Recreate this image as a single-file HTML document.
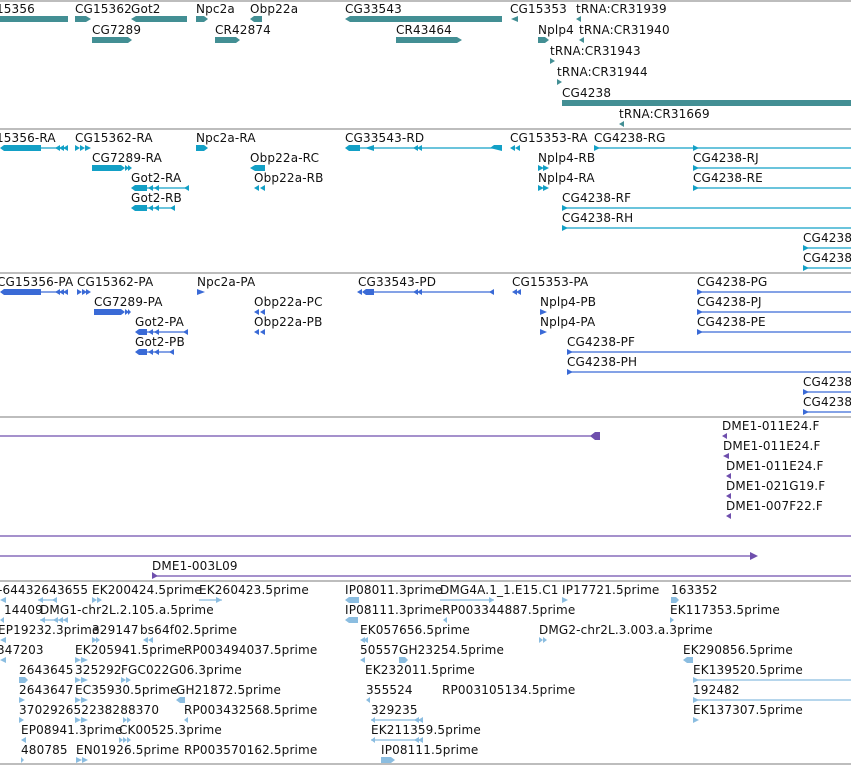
<!DOCTYPE html>
<html><head><meta charset="utf-8"><style>
html,body{margin:0;padding:0;background:#fff;overflow:hidden}
svg{display:block}
text{font-family:"DejaVu Sans","Liberation Sans",sans-serif;font-size:12px;letter-spacing:0.15px;fill:#111}
</style></head><body>
<svg width="851" height="765" viewBox="0 0 851 765" xmlns="http://www.w3.org/2000/svg">
<g stroke="#bdbdbd" stroke-width="2">
<line x1="0" y1="1" x2="851" y2="1"/><line x1="0" y1="129" x2="851" y2="129"/>
<line x1="0" y1="273" x2="851" y2="273"/><line x1="0" y1="417" x2="851" y2="417"/>
<line x1="0" y1="581" x2="851" y2="581"/><line x1="0" y1="764" x2="851" y2="764"/>
</g>

<g fill="#438f94">
<rect x="0" y="16" width="68" height="6"/>
<polygon points="75,16 86,16 91,19 86,22 75,22"/>
<polygon points="136,16 187,16 187,22 136,22 131,19"/>
<polygon points="196,16 204,16 208,19 204,22 196,22"/>
<polygon points="254,16 262,16 262,22 254,22 250,19"/>
<polygon points="350,16 502,16 502,22 350,22 345,19"/>
<polygon points="518,16 518,22 511,19"/>
<polygon points="581,16 581,22 576,19"/>
<polygon points="92,37 128,37 132,40 128,43 92,43"/>
<polygon points="215,37 236,37 240,40 236,43 215,43"/>
<polygon points="396,37 457,37 462,40 457,43 396,43"/>
<polygon points="538,37 545,37 549,40 545,43 538,43"/>
<polygon points="584,37 584,43 579,40"/>
<polygon points="550,58 555,61 550,64"/>
<polygon points="557,79 562,82 557,85"/>
<rect x="562" y="100" width="289" height="6"/>
<polygon points="624,121 624,127 619,124"/>
</g>
<g>
<text x="-22" y="13">CG15356</text><text x="75" y="13">CG15362</text><text x="131" y="13">Got2</text>
<text x="196" y="13">Npc2a</text><text x="250" y="13">Obp22a</text><text x="345" y="13">CG33543</text>
<text x="510" y="13">CG15353</text><text x="576" y="13">tRNA:CR31939</text>
<text x="92" y="34">CG7289</text><text x="215" y="34">CR42874</text><text x="396" y="34">CR43464</text>
<text x="538" y="34">Nplp4</text><text x="579" y="34">tRNA:CR31940</text>
<text x="550" y="55">tRNA:CR31943</text><text x="557" y="76">tRNA:CR31944</text>
<text x="562" y="97">CG4238</text><text x="619" y="118">tRNA:CR31669</text>
</g>

<g fill="#13a0c6" stroke="#13a0c6">
<g stroke="none">
<polygon points="4,145 41,145 41,151 4,151 0,148"/>
<polygon points="60,145 60,151 55,148"/><polygon points="64,145 64,151 59,148"/><polygon points="68,145 68,151 63,148"/>
<polygon points="75,145 80,148 75,151"/><polygon points="80,145 85,148 80,151"/><polygon points="85,145 91,148 85,151"/>
<polygon points="196,145 204,145 208,148 204,151 196,151"/>
<polygon points="349,145 360,145 360,151 349,151 345,148"/><polygon points="374,145 374,151 365,148"/>
<polygon points="418,145 418,151 413,148"/><polygon points="422,145 422,151 417,148"/>
<polygon points="494,145 502,145 502,151 490,148"/>
<polygon points="515,145 515,151 510,148"/><polygon points="520,145 520,151 515,148"/>
<polygon points="594,145 600,148 594,151"/><polygon points="693,145 699,148 693,151"/>
<polygon points="92,165 121,165 125,168 121,171 92,171"/><polygon points="125,165 129,168 125,171"/><polygon points="128,165 132,168 128,171"/>
<polygon points="255,165 265,165 265,171 255,171 250,168"/>
<polygon points="538,165 544,168 538,171"/><polygon points="543,165 549,168 543,171"/>
<polygon points="693,165 699,168 693,171"/>
<polygon points="135,185 147,185 147,191 135,191 131,188"/><polygon points="153,185 153,191 148,188"/><polygon points="159,185 159,191 154,188"/><polygon points="189,185 189,191 184,188"/>
<polygon points="259,185 259,191 254,188"/><polygon points="265,185 265,191 260,188"/>
<polygon points="538,185 544,188 538,191"/><polygon points="543,185 549,188 543,191"/>
<polygon points="693,185 699,188 693,191"/>
<polygon points="135,205 147,205 147,211 135,211 131,208"/><polygon points="153,205 153,211 148,208"/><polygon points="159,205 159,211 154,208"/><polygon points="175,205 175,211 170,208"/>
<polygon points="562,205 568,208 562,211"/><polygon points="562,225 568,228 562,231"/>
<polygon points="803,245 809,248 803,251"/><polygon points="803,265 809,268 803,271"/>
</g>
<g stroke-width="1.2" fill="none">
<line x1="41" y1="148" x2="68" y2="148"/><line x1="360" y1="148" x2="502" y2="148"/>
<line x1="594" y1="148" x2="851" y2="148"/><line x1="693" y1="168" x2="851" y2="168"/>
<line x1="147" y1="188" x2="189" y2="188"/><line x1="693" y1="188" x2="851" y2="188"/>
<line x1="147" y1="208" x2="175" y2="208"/><line x1="562" y1="208" x2="851" y2="208"/>
<line x1="562" y1="228" x2="851" y2="228"/><line x1="803" y1="248" x2="851" y2="248"/><line x1="803" y1="268" x2="851" y2="268"/>
</g>
</g>
<g>
<text x="-22" y="142">CG15356-RA</text><text x="75" y="142">CG15362-RA</text><text x="196" y="142">Npc2a-RA</text>
<text x="345" y="142">CG33543-RD</text><text x="510" y="142">CG15353-RA</text><text x="594" y="142">CG4238-RG</text>
<text x="92" y="162">CG7289-RA</text><text x="250" y="162">Obp22a-RC</text><text x="538" y="162">Nplp4-RB</text><text x="693" y="162">CG4238-RJ</text>
<text x="131" y="182">Got2-RA</text><text x="254" y="182">Obp22a-RB</text><text x="538" y="182">Nplp4-RA</text><text x="693" y="182">CG4238-RE</text>
<text x="131" y="202">Got2-RB</text><text x="562" y="202">CG4238-RF</text>
<text x="562" y="222">CG4238-RH</text><text x="803" y="242">CG4238</text><text x="803" y="262">CG4238</text>
</g>

<g fill="#3a6ad6" stroke="#3a6ad6">
<g stroke="none">
<polygon points="4,289 41,289 41,295 4,295 0,292"/>
<polygon points="60,289 60,295 55,292"/><polygon points="64,289 64,295 59,292"/><polygon points="68,289 68,295 63,292"/>
<polygon points="77,289 82,292 77,295"/><polygon points="82,289 87,292 82,295"/><polygon points="86,289 91,292 86,295"/>
<polygon points="197,289 205,292 197,295"/>
<polygon points="362,289 362,295 357,292"/><polygon points="366,289 374,289 374,295 366,295 362,292"/>
<polygon points="418,289 418,295 413,292"/><polygon points="422,289 422,295 417,292"/><polygon points="494,289 494,295 489,292"/>
<polygon points="517,289 517,295 512,292"/><polygon points="521,289 521,295 516,292"/>
<polygon points="697,289 703,292 697,295"/>
<polygon points="94,309 121,309 125,312 121,315 94,315"/><polygon points="125,309 129,312 125,315"/><polygon points="128,309 131,312 128,315"/>
<polygon points="259,309 259,315 254,312"/><polygon points="265,309 265,315 260,312"/>
<polygon points="540,309 547,312 540,315"/><polygon points="697,309 703,312 697,315"/>
<polygon points="139,329 147,329 147,335 139,335 135,332"/><polygon points="153,329 153,335 148,332"/><polygon points="159,329 159,335 154,332"/><polygon points="188,329 188,335 183,332"/>
<polygon points="259,329 259,335 254,332"/><polygon points="265,329 265,335 260,332"/>
<polygon points="540,329 547,332 540,335"/><polygon points="697,329 703,332 697,335"/>
<polygon points="139,349 147,349 147,355 139,355 135,352"/><polygon points="153,349 153,355 148,352"/><polygon points="159,349 159,355 154,352"/><polygon points="174,349 174,355 169,352"/>
<polygon points="567,349 573,352 567,355"/><polygon points="567,369 573,372 567,375"/>
<polygon points="803,389 809,392 803,395"/><polygon points="803,409 809,412 803,415"/>
</g>
<g stroke-width="1.2" fill="none">
<line x1="41" y1="292" x2="68" y2="292"/><line x1="374" y1="292" x2="494" y2="292"/>
<line x1="697" y1="292" x2="851" y2="292"/><line x1="697" y1="312" x2="851" y2="312"/>
<line x1="147" y1="332" x2="188" y2="332"/><line x1="697" y1="332" x2="851" y2="332"/>
<line x1="147" y1="352" x2="174" y2="352"/><line x1="567" y1="352" x2="851" y2="352"/>
<line x1="567" y1="372" x2="851" y2="372"/><line x1="803" y1="392" x2="851" y2="392"/><line x1="803" y1="412" x2="851" y2="412"/>
</g>
</g>
<g>
<text x="-3" y="286">CG15356-PA</text><text x="77" y="286">CG15362-PA</text><text x="197" y="286">Npc2a-PA</text>
<text x="358" y="286">CG33543-PD</text><text x="512" y="286">CG15353-PA</text><text x="697" y="286">CG4238-PG</text>
<text x="94" y="306">CG7289-PA</text><text x="254" y="306">Obp22a-PC</text><text x="540" y="306">Nplp4-PB</text><text x="697" y="306">CG4238-PJ</text>
<text x="135" y="326">Got2-PA</text><text x="254" y="326">Obp22a-PB</text><text x="540" y="326">Nplp4-PA</text><text x="697" y="326">CG4238-PE</text>
<text x="135" y="346">Got2-PB</text><text x="567" y="346">CG4238-PF</text>
<text x="567" y="366">CG4238-PH</text><text x="803" y="386">CG4238</text><text x="803" y="406">CG4238</text>
</g>

<g fill="#6f4fad" stroke="#6f4fad">
<g stroke-width="1.3" fill="none">
<line x1="0" y1="436" x2="592" y2="436"/><line x1="0" y1="536" x2="851" y2="536"/>
<line x1="0" y1="556" x2="752" y2="556"/><line x1="152" y1="576" x2="851" y2="576"/>
</g>
<g stroke="none">
<polygon points="595,432 600,432 600,440 595,440 590,436"/>
<polygon points="727,433 727,439 722,436"/><polygon points="729,453 729,459 723,456"/>
<polygon points="731,473 731,479 726,476"/><polygon points="731,493 731,499 726,496"/><polygon points="731,513 731,519 726,516"/>
<polygon points="750,552 758,556 750,560"/><polygon points="152,572 158,576 152,579"/>
</g>
</g>
<g>
<text x="722" y="430">DME1-011E24.F</text><text x="723" y="450">DME1-011E24.F</text>
<text x="726" y="470">DME1-011E24.F</text><text x="726" y="490">DME1-021G19.F</text><text x="726" y="510">DME1-007F22.F</text>
<text x="152" y="570">DME1-003L09</text>
</g>

<g fill="#8bbde0" stroke="#8bbde0">
<g stroke="none">
<polygon points="6,597 6,603 0,600"/><polygon points="43,597 43,603 38,600"/><polygon points="57,597 57,603 52,600"/>
<polygon points="92,597 97,600 92,603"/><polygon points="97,597 102,600 97,603"/><polygon points="216,597 222,600 216,603"/>
<polygon points="349,597 359,597 359,603 349,603 345,600"/><polygon points="489,597 494,600 489,603"/>
<polygon points="562,597 568,600 562,603"/><polygon points="671,597 676,597 679,600 676,603 671,603"/>
<polygon points="4,617 4,623 0,620"/><polygon points="45,617 45,623 40,620"/><polygon points="58,617 58,623 53,620"/><polygon points="63,617 63,623 58,620"/><polygon points="68,617 68,623 63,620"/>
<polygon points="349,617 358,617 358,623 349,623 345,620"/><polygon points="447,617 447,623 443,620"/><polygon points="670,617 674,620 670,623"/>
<polygon points="6,637 6,643 0,640"/><polygon points="92,637 97,640 92,643"/><polygon points="96,637 100,640 96,643"/>
<polygon points="148,637 148,643 143,640"/><polygon points="153,637 153,643 148,640"/>
<polygon points="365,637 365,643 360,640"/><polygon points="368,637 368,643 363,640"/>
<polygon points="539,637 543,640 539,643"/><polygon points="543,637 547,640 543,643"/>
<polygon points="6,657 6,663 0,660"/><polygon points="75,657 81,660 75,663"/><polygon points="81,657 88,660 81,663"/>
<polygon points="365,657 365,663 360,660"/><polygon points="399,657 405,657 408,660 405,663 399,663"/>
<polygon points="687,657 693,657 693,663 687,663 683,660"/>
<polygon points="19,677 25,677 28,680 25,683 19,683"/><polygon points="75,677 81,680 75,683"/><polygon points="81,677 88,680 81,683"/>
<polygon points="121,677 126,680 121,683"/><polygon points="126,677 131,680 126,683"/><polygon points="693,677 699,680 693,683"/>
<polygon points="19,697 25,700 19,703"/><polygon points="75,697 81,700 75,703"/><polygon points="81,697 88,700 81,703"/>
<polygon points="180,697 185,697 185,703 180,703 176,700"/><polygon points="370,697 370,703 366,700"/><polygon points="693,697 699,700 693,703"/>
<polygon points="19,717 24,720 19,723"/><polygon points="75,717 81,720 75,723"/><polygon points="81,717 88,720 81,723"/>
<polygon points="123,717 127,720 123,723"/><polygon points="127,717 131,720 127,723"/><polygon points="188,717 188,723 184,720"/>
<polygon points="375,717 375,723 371,720"/><polygon points="419,717 419,723 414,720"/><polygon points="423,717 423,723 418,720"/>
<polygon points="693,717 699,720 693,723"/>
<polygon points="26,737 26,743 21,740"/><polygon points="119,737 123,740 119,743"/><polygon points="123,737 127,740 123,743"/><polygon points="127,737 131,740 127,743"/>
<polygon points="375,737 375,743 371,740"/><polygon points="419,737 419,743 414,740"/><polygon points="423,737 423,743 418,740"/>
<polygon points="21,757 24,760 21,763"/><polygon points="76,757 82,760 76,763"/><polygon points="82,757 88,760 82,763"/>
<polygon points="381,757 391,757 395,760 391,763 381,763"/>
</g>
<g stroke-width="1.2" fill="none">
<line x1="38" y1="600" x2="57" y2="600"/><line x1="199" y1="600" x2="222" y2="600"/><line x1="440" y1="600" x2="494" y2="600"/>
<line x1="40" y1="620" x2="68" y2="620"/><line x1="693" y1="680" x2="851" y2="680"/><line x1="693" y1="700" x2="851" y2="700"/>
<line x1="371" y1="720" x2="423" y2="720"/><line x1="371" y1="740" x2="423" y2="740"/>
</g>
</g>
<g>
<text x="-2" y="594">-64432643655</text><text x="92" y="594">EK200424.5prime</text><text x="199" y="594">EK260423.5prime</text>
<text x="345" y="594">IP08011.3prime</text><text x="440" y="594">DMG4A.1_1.E15.C1</text><text x="562" y="594">IP17721.5prime</text><text x="671" y="594">163352</text>
<text x="4" y="614">14409</text><text x="40" y="614">DMG1-chr2L.2.105.a.5prime</text><text x="345" y="614">IP08111.3prime</text>
<text x="442" y="614">RP003344887.5prime</text><text x="670" y="614">EK117353.5prime</text>
<text x="-2" y="634">EP19232.3prime</text><text x="92" y="634">329147</text><text x="140" y="634">bs64f02.5prime</text>
<text x="360" y="634">EK057656.5prime</text><text x="539" y="634">DMG2-chr2L.3.003.a.3prime</text>
<text x="-3" y="654">347203</text><text x="75" y="654">EK205941.5prime</text><text x="184" y="654">RP003494037.5prime</text>
<text x="360" y="654">50557</text><text x="399" y="654">GH23254.5prime</text><text x="683" y="654">EK290856.5prime</text>
<text x="19" y="674">2643645</text><text x="75" y="674">325292</text><text x="121" y="674">FGC022G06.3prime</text>
<text x="365" y="674">EK232011.5prime</text><text x="693" y="674">EK139520.5prime</text>
<text x="19" y="694">2643647</text><text x="75" y="694">EC35930.5prime</text><text x="176" y="694">GH21872.5prime</text>
<text x="366" y="694">355524</text><text x="442" y="694">RP003105134.5prime</text><text x="693" y="694">192482</text>
<text x="19" y="714">370292652238288370</text><text x="184" y="714">RP003432568.5prime</text><text x="371" y="714">329235</text><text x="693" y="714">EK137307.5prime</text>
<text x="21" y="734">EP08941.3prime</text><text x="119" y="734">CK00525.3prime</text><text x="371" y="734">EK211359.5prime</text>
<text x="21" y="754">480785</text><text x="76" y="754">EN01926.5prime</text><text x="184" y="754">RP003570162.5prime</text><text x="381" y="754">IP08111.5prime</text>
</g>
</svg>
</body></html>
